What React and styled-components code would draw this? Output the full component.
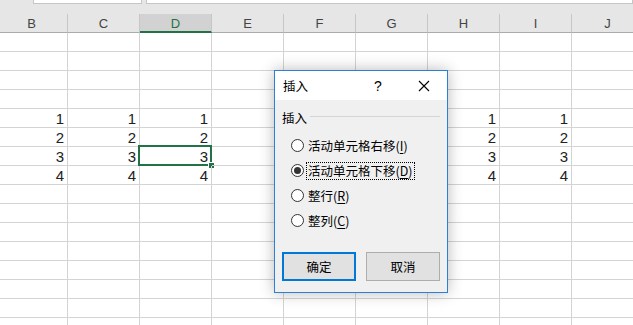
import React from "react";
import styled, { createGlobalStyle } from "styled-components";

const GlobalStyle = createGlobalStyle`
  html, body {
    margin: 0;
    padding: 0;
    width: 633px;
    height: 325px;
    overflow: hidden;
    background: #fff;
  }
  * { box-sizing: border-box; }
`;

const Page = styled.div`
  position: relative;
  width: 633px;
  height: 325px;
  overflow: hidden;
  background: #fff;
  font-family: "Liberation Sans", Arial, sans-serif;
`;

const TopStrip = styled.div`
  height: 14px;
  background: #e6e6e6;
  display: flex;
  align-items: flex-start;
  padding-left: 33px;
  gap: 4px;
`;

const FieldBox = styled.div`
  height: 4px;
  width: ${(p) => (p.$grow ? "auto" : "109px")};
  flex: ${(p) => (p.$grow ? "1" : "none")};
  background: #fff;
  border: 1px solid #c6c6c6;
  border-top: none;
`;

const Sheet = styled.div`
  display: grid;
  grid-template-columns: repeat(9, 72px);
  grid-auto-rows: 19px;
  margin-left: -4px;
`;

const ColHead = styled.div`
  background: ${(p) => (p.$active ? "#d2d2d2" : "#e6e6e6")};
  border-right: 1px solid #c6c6c6;
  border-bottom: ${(p) => (p.$active ? "2px solid #217346" : "1px solid #ababab")};
  color: ${(p) => (p.$active ? "#217346" : "#444")};
  font-size: 13px;
  display: flex;
  align-items: center;
  justify-content: center;
  padding-top: 1px;
`;

const Cell = styled.div`
  position: relative;
  border-right: 1px solid #d4d4d4;
  border-bottom: 1px solid #d4d4d4;
  font-size: 15px;
  color: #222;
  text-align: right;
  padding-right: 3px;
  line-height: 19px;
`;

const Selection = styled.div`
  position: absolute;
  top: -2px;
  left: -2px;
  right: -1px;
  bottom: -1px;
  border: 2px solid #217346;
  pointer-events: none;
`;

const FillHandle = styled.div`
  position: absolute;
  right: -5px;
  bottom: -5px;
  width: 7px;
  height: 7px;
  background: #217346;
  border: 1px solid #fff;
`;

const Dialog = styled.div`
  position: absolute;
  left: 274px;
  top: 70px;
  width: 174px;
  height: 223px;
  border: 1px solid #2b7fd4;
  background: #f0f0f0;
  box-shadow: 0 0 14px rgba(0, 0, 0, 0.28);
  display: flex;
  flex-direction: column;
  font-family: "Noto Sans CJK SC", "Liberation Sans", sans-serif;
  font-size: 12.5px;
  color: #000;
`;

const TitleBar = styled.div`
  height: 29px;
  background: #fff;
  display: flex;
  align-items: center;
  padding-left: 8px;
`;

const Title = styled.span`
  flex: 1;
`;

const TitleBtn = styled.span`
  width: 46px;
  display: flex;
  align-items: center;
  justify-content: center;
  font-size: 14px;
  font-family: "Liberation Sans", sans-serif;
`;

const Body = styled.div`
  flex: 1;
  display: flex;
  flex-direction: column;
  padding: 9px 7px 0 7px;
`;

const GroupHead = styled.div`
  display: flex;
  align-items: center;
  gap: 3px;
  height: 16px;
  margin-bottom: 8px;
  &::after {
    content: "";
    flex: 1;
    border-top: 1px solid #d5d5d5;
    margin-top: -1px;
  }
`;

const RadioRow = styled.div`
  height: 25px;
  display: flex;
  align-items: center;
  padding-left: 9px;
  gap: 2px;
`;

const RadioDot = styled.span`
  width: 13px;
  height: 13px;
  border-radius: 50%;
  border: 1px solid #333;
  background: #fff;
  display: flex;
  align-items: center;
  justify-content: center;
  &::after {
    content: "";
    width: 7px;
    height: 7px;
    border-radius: 50%;
    background: ${(p) => (p.$checked ? "#333" : "transparent")};
  }
`;

const RadioLabel = styled.span`
  padding: 0 1px;
  line-height: 16px;
  border: 1px dotted ${(p) => (p.$focus ? "#000" : "transparent")};
  u {
    text-underline-offset: 2px;
  }
`;

const Buttons = styled.div`
  margin-top: 19px;
  display: flex;
  justify-content: space-between;
`;

const Button = styled.div`
  width: 74px;
  height: 29px;
  background: #e1e1e1;
  border: ${(p) => (p.$primary ? "2px solid #0078d7" : "1px solid #adadad")};
  display: flex;
  align-items: center;
  justify-content: center;
`;

const cols = ["B", "C", "D", "E", "F", "G", "H", "I", "J"];
const valueCols = [0, 1, 2, 6, 7];

const options = [
  { text: "活动单元格右移", key: "I" },
  { text: "活动单元格下移", key: "D", checked: true },
  { text: "整行", key: "R" },
  { text: "整列", key: "C" },
];

export default function App() {
  const rows = Array.from({ length: 16 }, (_, r) => r);
  return (
    <Page>
      <GlobalStyle />
      <TopStrip>
        <FieldBox />
        <FieldBox $grow />
      </TopStrip>
      <Sheet>
        {cols.map((c, i) => (
          <ColHead key={c} $active={i === 2}>
            {c}
          </ColHead>
        ))}
        {rows.map((r) =>
          cols.map((c, ci) => {
            const v = r >= 4 && r <= 7 && valueCols.includes(ci) ? r - 3 : "";
            const selected = r === 6 && ci === 2;
            return (
              <Cell key={c + r}>
                {v}
                {selected && (
                  <Selection>
                    <FillHandle />
                  </Selection>
                )}
              </Cell>
            );
          })
        )}
      </Sheet>

      <Dialog>
        <TitleBar>
          <Title>插入</Title>
          <TitleBtn>?</TitleBtn>
          <TitleBtn>
            <svg width="12" height="12" viewBox="0 0 12 12">
              <path d="M1 1L11 11M11 1L1 11" stroke="#000" strokeWidth="1.1" fill="none" />
            </svg>
          </TitleBtn>
        </TitleBar>
        <Body>
          <GroupHead>插入</GroupHead>
          {options.map((o) => (
            <RadioRow key={o.key}>
              <RadioDot $checked={o.checked} />
              <RadioLabel $focus={o.checked}>
                {o.text}(<u>{o.key}</u>)
              </RadioLabel>
            </RadioRow>
          ))}
          <Buttons>
            <Button $primary>确定</Button>
            <Button>取消</Button>
          </Buttons>
        </Body>
      </Dialog>
    </Page>
  );
}
